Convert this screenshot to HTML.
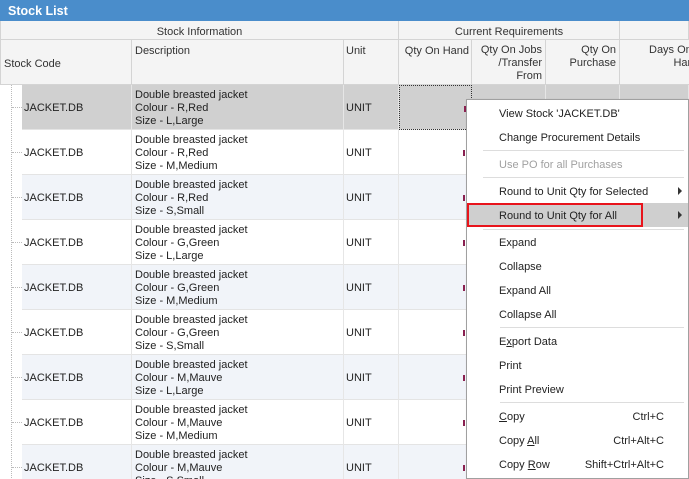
<!DOCTYPE html>
<html style="width:689px;height:479px;overflow:hidden"><head><meta charset="utf-8"><style>
*{margin:0;padding:0;box-sizing:border-box}
body{width:689px;height:479px;overflow:hidden;background:#fff;font-family:"Liberation Sans",Tahoma,sans-serif;font-size:11px;color:#222;position:relative}
.a{position:absolute}
.title{left:0;top:0;width:689px;height:21px;background:#4a8dcb;color:#fff;font-weight:bold;font-size:12.5px;padding:4px 0 0 8px}
.hdr{background:#f4f4f4;border-right:1px solid #d4d4d4;border-bottom:1px solid #d4d4d4;color:#333}
.row{left:0;width:689px;height:45px;border-bottom:1px solid #e4e4e4}
.c{position:absolute;top:0;height:45px;border-right:1px solid #e6e6e6}
.menu{left:466px;top:99px;width:223px;height:380px;background:#fff;border:1px solid #a0a0a0;box-shadow:1px 1px 2px rgba(0,0,0,.2)}
.mi{position:absolute;left:32px;font-size:11px;color:#222}
.sep{position:absolute;left:30px;right:4px;height:1px;background:#ddd}
.sc{position:absolute;right:24px}
u{text-decoration:underline}
</style></head><body>
<div class="a title">Stock List</div>
<div class="a hdr" style="left:0;top:21px;width:399px;height:19px;text-align:center;padding-top:5px;border-left:1px solid #d4d4d4">Stock Information</div>
<div class="a hdr" style="left:399px;top:21px;width:221px;height:19px;text-align:center;padding-top:5px">Current Requirements</div>
<div class="a hdr" style="left:620px;top:21px;width:69px;height:19px"></div>
<div class="a hdr" style="left:0;top:40px;width:132px;height:45px;padding:18px 0 0 3px;border-left:1px solid #d4d4d4">Stock Code</div>
<div class="a hdr" style="left:132px;top:40px;width:212px;height:45px;padding:5px 0 0 3px">Description</div>
<div class="a hdr" style="left:344px;top:40px;width:55px;height:45px;padding:5px 0 0 2px">Unit</div>
<div class="a hdr" style="left:399px;top:40px;width:73px;height:45px;padding:5px 2px 0 0;text-align:right">Qty On Hand</div>
<div class="a hdr" style="left:472px;top:40px;width:74px;height:45px;padding:4px 3px 0 0;text-align:right;line-height:13px">Qty On Jobs<br>/Transfer<br>From</div>
<div class="a hdr" style="left:546px;top:40px;width:74px;height:45px;padding:4px 3px 0 0;text-align:right;line-height:13px">Qty On<br>Purchase</div>
<div class="a hdr" style="left:620px;top:40px;width:80px;height:45px;padding:4px 0 0 29px;text-align:left;line-height:13px;white-space:nowrap">Days On<br>&nbsp;&nbsp;&nbsp;&nbsp;&nbsp;&nbsp;&nbsp;&nbsp;Hand</div>
<div id="rows"></div>
<script>
var d=[["R,Red","L,Large"],["R,Red","M,Medium"],["R,Red","S,Small"],["G,Green","L,Large"],["G,Green","M,Medium"],["G,Green","S,Small"],["M,Mauve","L,Large"],["M,Mauve","M,Medium"],["M,Mauve","S,Small"]];
var h="";
for(var i=0;i<9;i++){var t=85+i*45;var bg=i==0?"#d0d0d0":(i%2==0?"#f1f4f9":"#fff");
h+='<div class="a row" style="top:'+t+'px;background:'+bg+'">'+
'<div class="c" style="left:0;width:22px;background:#fff;border-right:none"><div style="position:absolute;left:11px;top:0;height:45px;border-left:1px dotted #bbb"></div><div style="position:absolute;left:12px;top:22px;width:10px;border-top:1px dotted #bbb"></div></div>'+
'<div class="c" style="left:22px;width:110px;padding:17px 0 0 2px">JACKET.DB</div>'+
'<div class="c" style="left:132px;width:212px;padding:4px 0 0 3px;line-height:13px">Double breasted jacket<br>Colour - '+d[i][0]+'<br>Size - '+d[i][1]+'</div>'+
'<div class="c" style="left:344px;width:55px;padding:17px 0 0 2px">UNIT</div>'+
'<div class="c" style="left:399px;width:73px;'+(i==0?'border:1px dotted #333;':'')+'"><div style="position:absolute;left:64px;top:20px;width:2px;height:6px;background:#8a2050"></div></div>'+
'<div class="c" style="left:472px;width:74px"></div><div class="c" style="left:546px;width:74px"></div><div class="c" style="left:620px;width:69px"></div>'+
'</div>';}
document.getElementById("rows").innerHTML=h;
</script>
<div class="a menu">
<div class="mi" style="top:8px">View Stock 'JACKET.DB'</div>
<div class="mi" style="top:32px">Change Procurement Details</div>
<div class="sep" style="top:50px;left:16px"></div>
<div class="mi" style="top:59px;color:#a0a0a0">Use PO for all Purchases</div>
<div class="sep" style="top:77px;left:16px"></div>
<div class="mi" style="top:86px">Round to Unit Qty for Selected</div>
<div style="position:absolute;right:6px;top:87px;width:0;height:0;border-left:4px solid #333;border-top:4px solid transparent;border-bottom:4px solid transparent"></div>
<div style="position:absolute;left:0;top:103px;width:221px;height:24px;background:#cfcfcf"></div>
<div style="position:absolute;left:0;top:103px;width:176px;height:24px;border:2px solid #e8141c"></div>
<div class="mi" style="top:110px">Round to Unit Qty for All</div>
<div style="position:absolute;right:6px;top:111px;width:0;height:0;border-left:4px solid #333;border-top:4px solid transparent;border-bottom:4px solid transparent"></div>
<div class="sep" style="top:129px;left:16px"></div>
<div class="mi" style="top:137px">Expand</div>
<div class="mi" style="top:161px">Collapse</div>
<div class="mi" style="top:185px">Expand All</div>
<div class="mi" style="top:209px">Collapse All</div>
<div class="sep" style="top:227px;left:33px"></div>
<div class="mi" style="top:236px">E<u>x</u>port Data</div>
<div class="mi" style="top:260px">Print</div>
<div class="mi" style="top:284px">Print Preview</div>
<div class="sep" style="top:302px;left:33px"></div>
<div class="mi" style="top:311px"><u>C</u>opy</div><div class="sc" style="top:311px">Ctrl+C</div>
<div class="mi" style="top:335px">Copy <u>A</u>ll</div><div class="sc" style="top:335px">Ctrl+Alt+C</div>
<div class="mi" style="top:359px">Copy <u>R</u>ow</div><div class="sc" style="top:359px">Shift+Ctrl+Alt+C</div>
</div>
</body></html>
